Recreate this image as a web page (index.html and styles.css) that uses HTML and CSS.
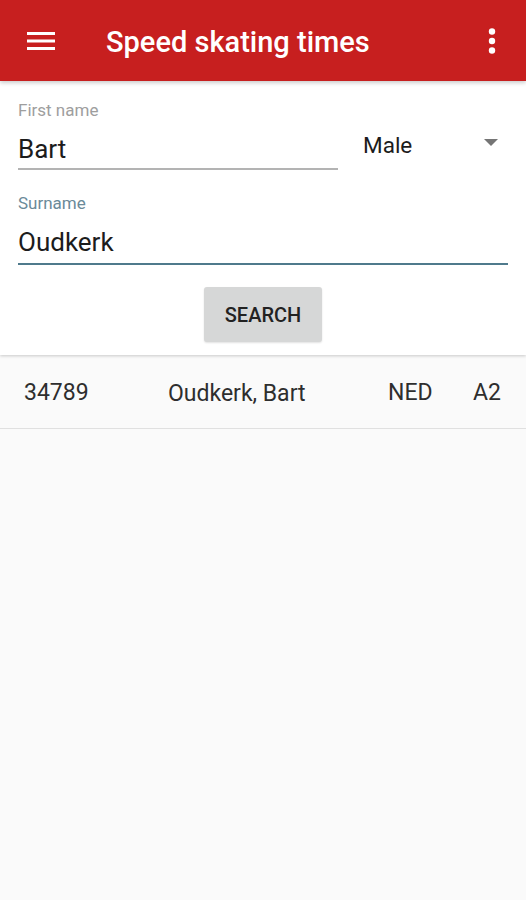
FILE: index.html
```html
<!DOCTYPE html>
<html lang="en">
  <head>
    <meta charset="UTF-8" />
    <meta name="viewport" content="width=device-width, initial-scale=1.0" />
    <title>Speed skating times</title>
    <link rel="stylesheet" href="styles.css">
  </head>
  <body>
    <header class="toolbar">
      <svg class="menu-icon" width="28" height="18" viewBox="0 0 28 18">
        <rect x="0" y="0" width="28" height="3" fill="#fff" />
        <rect x="0" y="7.5" width="28" height="3" fill="#fff" />
        <rect x="0" y="15" width="28" height="3" fill="#fff" />
      </svg>
      <h1 class="title">Speed skating times</h1>
      <svg class="more-icon" width="8" height="26" viewBox="0 0 8 26">
        <circle cx="4" cy="3.5" r="3.2" fill="#fff" />
        <circle cx="4" cy="13" r="3.2" fill="#fff" />
        <circle cx="4" cy="22.5" r="3.2" fill="#fff" />
      </svg>
    </header>

    <section class="search-card">
      <div class="name-row">
        <div class="field first-name">
          <label class="field-label">First name</label>
          <div class="field-input">Bart</div>
        </div>
        <div class="gender">
          <span>Male</span>
          <svg width="14" height="7" viewBox="0 0 14 7">
            <polygon points="0,0 14,0 7,7" fill="#757575" />
          </svg>
        </div>
      </div>

      <div class="field surname">
        <label class="field-label">Surname</label>
        <div class="field-input">Oudkerk</div>
      </div>

      <div class="actions">
        <button class="search-btn">SEARCH</button>
      </div>
    </section>

    <div class="results">
      <div class="result-row">
        <span>34789</span>
        <span class="skater-name">Oudkerk, Bart</span>
        <span>NED</span>
        <span>A2</span>
      </div>
    </div>
  </body>
</html>
```

FILE: styles.css
```css
body {
  margin: 0;
  background-color: #fafafa;
  font-family: Roboto, "Noto Sans", sans-serif;
  color: #212121;
}
.toolbar {
  position: relative;
  z-index: 2;
  display: flex;
  align-items: center;
  height: 81px;
  padding: 0 30px 0 27px;
  background-color: #c71f1f;
  box-shadow: 0 2px 4px rgba(0, 0, 0, 0.2);
}
.menu-icon {
  flex-shrink: 0;
}
.title {
  flex: 1;
  margin: 0 0 0 51px;
  padding-top: 3px;
  color: #fff;
  font-size: 29px;
  font-weight: 500;
}
.search-card {
  position: relative;
  z-index: 1;
  padding: 19px 18px 13px;
  background-color: #fff;
  box-shadow: 0 1px 3px rgba(0, 0, 0, 0.2);
}
.name-row {
  display: flex;
  align-items: flex-start;
}
.first-name {
  width: 320px;
}
.field-label {
  display: block;
  font-size: 17px;
  line-height: 20px;
  color: #9e9e9e;
}
.field-input {
  margin-top: 14px;
  padding-bottom: 4px;
  font-size: 26px;
  line-height: 30px;
  color: #1c1c1c;
  border-bottom: 2px solid #b3b3b3;
}
.gender {
  flex: 1;
  display: flex;
  align-items: center;
  justify-content: space-between;
  margin-left: 25px;
  padding: 31px 10px 0 0;
  font-size: 22.5px;
  line-height: 28px;
  color: #1c1c1c;
}
.gender svg {
  margin-top: -5px;
}
.surname {
  margin-top: 23px;
}
.surname .field-label {
  color: #6b8a99;
}
.surname .field-input {
  padding-bottom: 6px;
  border-bottom-color: #4f7a8c;
}
.actions {
  display: flex;
  justify-content: center;
  margin-top: 22px;
}
.search-btn {
  width: 118px;
  height: 55px;
  border: none;
  border-radius: 3px;
  background-color: #d6d7d7;
  color: #222;
  font-family: Roboto, sans-serif;
  font-size: 20px;
  font-weight: 500;
  box-shadow: 0 1px 2px rgba(0, 0, 0, 0.12);
}
.result-row {
  display: grid;
  grid-template-columns: 144px 220px 85px auto;
  align-items: center;
  height: 72px;
  margin-top: 1px;
  padding-left: 24px;
  font-size: 23px;
  color: #2e2e2e;
  border-bottom: 1px solid #e0e0e0;
}
.skater-name {
  padding-top: 3px;
}
```
